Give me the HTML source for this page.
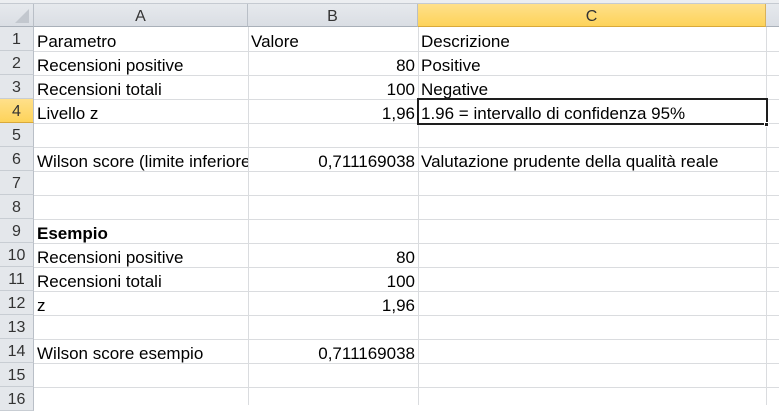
<!DOCTYPE html>
<html><head><meta charset="utf-8"><style>
*{margin:0;padding:0;box-sizing:border-box}
body{width:779px;height:405px;overflow:hidden;background:#fff;position:relative;font-family:"Liberation Sans",sans-serif;font-size:17px;letter-spacing:0;color:#000}
.top{position:absolute;left:0;top:0;width:779px;height:4px;background:#eceef1;border-bottom:1px solid #c5cad1}
.hdr{position:absolute;top:4px;height:23px;background:linear-gradient(#e6e9ed,#dadee4);border-right:1px solid #b9bfc7;border-bottom:1px solid #a9b0b9;text-align:center;line-height:25px;color:#333;font-size:16px;letter-spacing:0}
.hdr.sel{background:linear-gradient(#ffe08a,#fdd35a);border-bottom:1px solid #d9a93a;border-right:1px solid #d9b25a}
.rh{position:absolute;left:0;width:34px;height:24px;background:#e4e7eb;border-right:1px solid #b9bfc7;border-bottom:1px solid #c8cdd3;text-align:center;line-height:26px;color:#333;font-size:16px;letter-spacing:0}
.rh.sel{background:linear-gradient(#ffe08a,#fdd35a);border-bottom:1px solid #d9a93a}
.hl{position:absolute;left:34px;width:745px;height:1px;background:#dadcdf}
.vl{position:absolute;top:27px;width:1px;height:378px;background:#dadcdf}
.t{position:absolute;height:24px;line-height:28px;white-space:nowrap;overflow:hidden}
.r{text-align:right}
</style></head><body>
<div class="top"></div>
<div class="hdr" style="left:0;width:34px"><svg width="34" height="23" style="position:absolute;left:0;top:0"><polygon points="29,5 29,19 15,19" fill="#c2c7ce"/></svg></div>
<div class="hdr" style="left:34px;width:214px">A</div>
<div class="hdr" style="left:248px;width:170px">B</div>
<div class="hdr sel" style="left:418px;width:348px">C</div>
<div class="hdr" style="left:766px;width:20px"></div>

<div class="vl" style="left:248px"></div>
<div class="vl" style="left:418px"></div>
<div class="vl" style="left:766px"></div>

<div class="rh" style="top:27px">1</div><div class="hl" style="top:51px"></div>
<div class="rh" style="top:51px">2</div><div class="hl" style="top:75px"></div>
<div class="rh" style="top:75px">3</div><div class="hl" style="top:99px"></div>
<div class="rh sel" style="top:99px">4</div><div class="hl" style="top:123px"></div>
<div class="rh" style="top:123px">5</div><div class="hl" style="top:147px"></div>
<div class="rh" style="top:147px">6</div><div class="hl" style="top:171px"></div>
<div class="rh" style="top:171px">7</div><div class="hl" style="top:195px"></div>
<div class="rh" style="top:195px">8</div><div class="hl" style="top:219px"></div>
<div class="rh" style="top:219px">9</div><div class="hl" style="top:243px"></div>
<div class="rh" style="top:243px">10</div><div class="hl" style="top:267px"></div>
<div class="rh" style="top:267px">11</div><div class="hl" style="top:291px"></div>
<div class="rh" style="top:291px">12</div><div class="hl" style="top:315px"></div>
<div class="rh" style="top:315px">13</div><div class="hl" style="top:339px"></div>
<div class="rh" style="top:339px">14</div><div class="hl" style="top:363px"></div>
<div class="rh" style="top:363px">15</div><div class="hl" style="top:387px"></div>
<div class="rh" style="top:387px">16</div>

<div class="t" style="left:37px;top:28px">Parametro</div>
<div class="t" style="left:251px;top:28px">Valore</div>
<div class="t" style="left:421px;top:28px">Descrizione</div>
<div class="t" style="left:37px;top:52px">Recensioni positive</div>
<div class="t r" style="left:250px;width:165px;top:52px">80</div>
<div class="t" style="left:421px;top:52px">Positive</div>
<div class="t" style="left:37px;top:76px">Recensioni totali</div>
<div class="t r" style="left:250px;width:165px;top:76px">100</div>
<div class="t" style="left:421px;top:76px">Negative</div>
<div class="t" style="left:37px;top:100px">Livello z</div>
<div class="t r" style="left:250px;width:165px;top:100px">1,96</div>
<div class="t" style="left:421px;top:100px">1.96 = intervallo di confidenza 95%</div>
<div class="t" style="left:37px;top:148px;width:211px">Wilson score (limite inferiore)</div>
<div class="t r" style="left:250px;width:165px;top:148px">0,711169038</div>
<div class="t" style="left:421px;top:148px">Valutazione prudente della qualità reale</div>
<div class="t" style="left:37px;top:220px;font-weight:bold">Esempio</div>
<div class="t" style="left:37px;top:244px">Recensioni positive</div>
<div class="t r" style="left:250px;width:165px;top:244px">80</div>
<div class="t" style="left:37px;top:268px">Recensioni totali</div>
<div class="t r" style="left:250px;width:165px;top:268px">100</div>
<div class="t" style="left:37px;top:292px">z</div>
<div class="t r" style="left:250px;width:165px;top:292px">1,96</div>
<div class="t" style="left:37px;top:340px">Wilson score esempio</div>
<div class="t r" style="left:250px;width:165px;top:340px">0,711169038</div>

<div style="position:absolute;left:417px;top:98px;width:351px;height:27px;border:2px solid #1e1e1e"></div>
<div style="position:absolute;left:764px;top:122px;width:5px;height:5px;background:#1e1e1e;border:1px solid #fff"></div>
</body></html>
